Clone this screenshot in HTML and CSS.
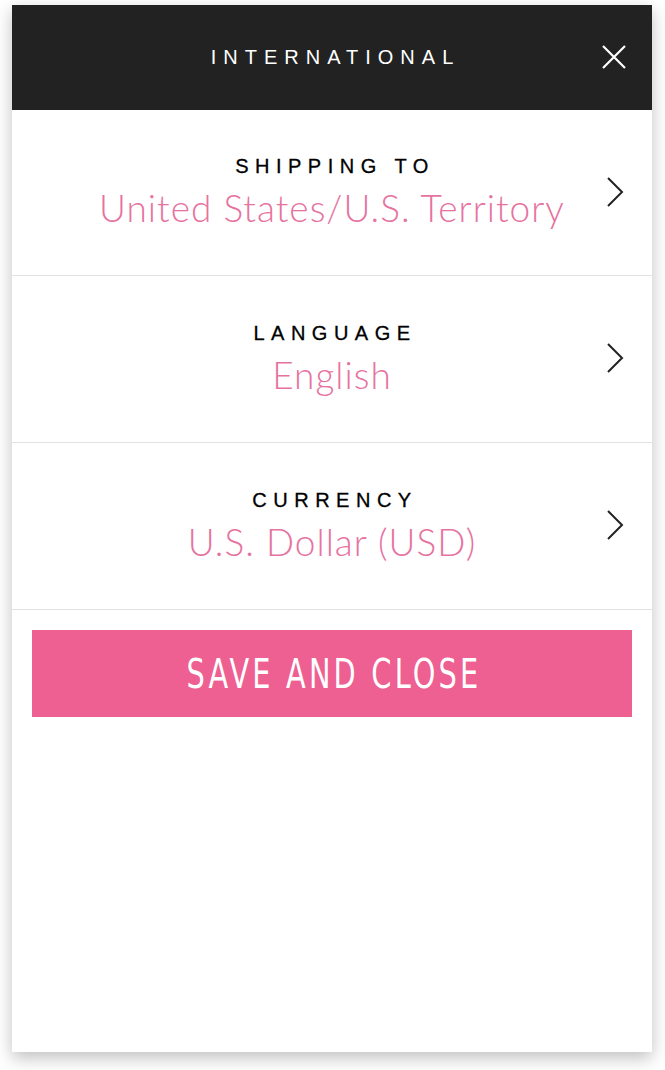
FILE: index.html
```html
<!DOCTYPE html>
<html lang="en">
<head>
  <meta charset="UTF-8">
  <title>International</title>
  <meta name="viewport" content="width=device-width, initial-scale=1">
  <link rel="stylesheet" href="styles.css">
</head>
<body>
  <div class="modal">
    <div class="modal-header">
      <h1>International</h1>
      <button class="close-btn" aria-label="Close">
        <svg width="24" height="24" viewBox="0 0 24 24">
          <path d="M1 1 L23 23 M23 1 L1 23" stroke="#fff" stroke-width="2.2" fill="none"/>
        </svg>
      </button>
    </div>
    <!-- Settings rows -->
    <a class="setting-row" href="#">
      <div class="setting-text">
        <div class="setting-label">Shipping to</div>
        <div class="setting-value">United States/U.S. Territory</div>
      </div>
      <svg class="chevron" width="18" height="30" viewBox="0 0 18 30">
        <path d="M2 1 L16 15 L2 29" stroke="#222" stroke-width="2" fill="none"/>
      </svg>
    </a>
    <a class="setting-row" href="#">
      <div class="setting-text">
        <div class="setting-label">Language</div>
        <div class="setting-value">English</div>
      </div>
      <svg class="chevron" width="18" height="30" viewBox="0 0 18 30">
        <path d="M2 1 L16 15 L2 29" stroke="#222" stroke-width="2" fill="none"/>
      </svg>
    </a>
    <a class="setting-row" href="#">
      <div class="setting-text">
        <div class="setting-label">Currency</div>
        <div class="setting-value">U.S. Dollar (USD)</div>
      </div>
      <svg class="chevron" width="18" height="30" viewBox="0 0 18 30">
        <path d="M2 1 L16 15 L2 29" stroke="#222" stroke-width="2" fill="none"/>
      </svg>
    </a>
    <div class="actions">
      <button class="save-btn"><span>Save and Close</span></button>
    </div>
  </div>
</body>
</html>
```

FILE: styles.css
```css
body {
  margin: 0;
  padding-bottom: 30px;
  background: #fff;
  font-family: 'Liberation Sans', Arial, sans-serif;
}
.modal {
  width: 640px;
  height: 1047px;
  margin: 5px 0 0 12px;
  background: #fff;
  box-shadow: 0 6px 16px rgba(0, 0, 0, 0.25);
}
.modal-header {
  height: 105px;
  background: #222;
  display: flex;
  align-items: center;
  justify-content: center;
  position: relative;
}
.modal-header h1 {
  margin: 0;
  color: #fff;
  font-size: 20px;
  font-weight: normal;
  text-transform: uppercase;
  letter-spacing: 7px;
  padding-left: 7px;
}
.close-btn {
  position: absolute;
  right: 26px;
  top: 40px;
  background: none;
  border: none;
  padding: 0;
  width: 24px;
  height: 24px;
  cursor: pointer;
}
.close-btn svg {
  display: block;
}
.setting-row {
  display: flex;
  align-items: center;
  height: 166px;
  border-bottom: 1px solid #e2e2e2;
  text-decoration: none;
  position: relative;
}
.modal-header + .setting-row {
  height: 165px;
}
.setting-text {
  flex: 1;
  text-align: center;
}
.setting-label {
  color: #000;
  font-size: 20px;
  text-transform: uppercase;
  letter-spacing: 6.5px;
  padding-left: 6px;
  -webkit-text-stroke: 0.3px #000;
}
.setting-value {
  color: #e6739f;
  font-family: 'Lato', 'Liberation Sans', sans-serif;
  font-weight: 300;
  font-size: 37px;
  letter-spacing: 1px;
  margin-top: 7px;
}
.chevron {
  position: absolute;
  right: 28px;
  top: 50%;
  margin-top: -16px;
}
.actions {
  padding: 20px;
}
.save-btn {
  display: block;
  width: 100%;
  height: 87px;
  border: none;
  background: #ee5f92;
  color: #fff;
  font-family: 'DejaVu Sans Condensed', 'DejaVu Sans', sans-serif;
  font-stretch: condensed;
  font-size: 40px;
  text-transform: uppercase;
  letter-spacing: 4px;
  cursor: pointer;
}
.save-btn span {
  display: inline-block;
  transform: scaleX(0.8);
  padding-left: 4px;
}
```
